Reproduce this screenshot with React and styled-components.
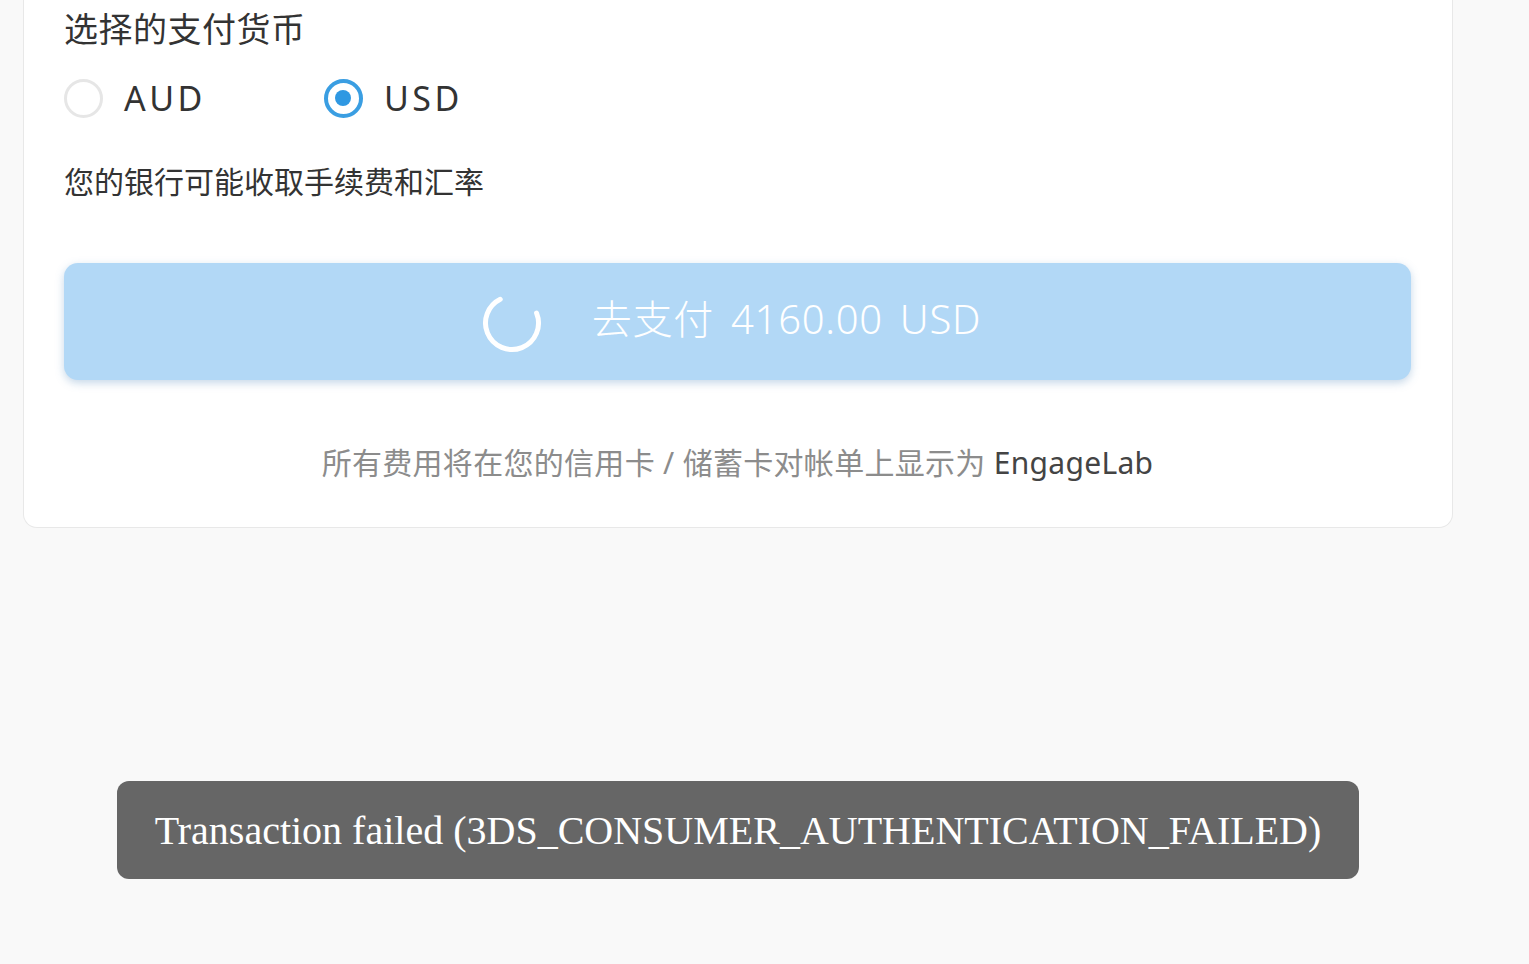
import styled, { createGlobalStyle } from "styled-components";

const GlobalStyle = createGlobalStyle`
  html, body {
    margin: 0;
    padding: 0;
    background: #f9f9f9;
  }
  body {
    font-family: "Noto Sans", "Noto Sans CJK SC", sans-serif;
    color: #333;
  }
`;

const Page = styled.div`
  padding: 0 76px 0 23px;
  min-height: 964px;
`;

const Card = styled.div`
  background: #fff;
  border: 1px solid #e8e8e8;
  border-top: 0;
  border-radius: 0 0 14px 14px;
  padding: 0 41px 34px 40px;
`;

const Title = styled.div`
  font-size: 34px;
  line-height: 58px;
  color: #333;
  letter-spacing: 0.5px;
`;

const RadioRow = styled.div`
  height: 80px;
  display: flex;
  align-items: center;
  gap: 118px;
`;

const RadioOption = styled.label`
  display: flex;
  align-items: center;
  gap: 21px;
  font-size: 34px;
  color: #333;
  letter-spacing: 3.5px;
`;

const RadioDot = styled.span`
  box-sizing: border-box;
  width: 39px;
  height: 39px;
  border-radius: 50%;
  border: ${(p) => (p.checked ? "4px solid #3a9ee2" : "3px solid #e6e6e6")};
  display: flex;
  align-items: center;
  justify-content: center;
  &::after {
    content: "";
    width: 16px;
    height: 16px;
    border-radius: 50%;
    background: #2f98e2;
    display: ${(p) => (p.checked ? "block" : "none")};
  }
`;

const Note = styled.div`
  font-size: 30px;
  line-height: 88px;
  color: #333;
`;

const PayButton = styled.button`
  margin-top: 37px;
  width: 100%;
  height: 117px;
  border: 0;
  border-radius: 14px;
  background: #b2d8f6;
  box-shadow: 0 3px 8px rgba(90, 140, 190, 0.35);
  display: flex;
  align-items: center;
  justify-content: center;
  gap: 50px;
  padding: 0 12px 0 0;
  color: #fff;
  font-family: "Noto Sans", "Noto Sans CJK SC", sans-serif;
  font-size: 40px;
  font-weight: 300;
  cursor: not-allowed;
`;

const ButtonLabel = styled.span`
  letter-spacing: 0.7px;
  word-spacing: 6px;
  padding-bottom: 9px;
`;

const Spinner = styled.svg`
  width: 60px;
  height: 60px;
  margin-top: 2px;
`;

const Footer = styled.div`
  margin-top: 53px;
  line-height: 60px;
  text-align: center;
  font-size: 30px;
  letter-spacing: 0.3px;
  color: #8c8c8c;
`;

const Brand = styled.span`
  color: #444;
`;

const ToastLayer = styled.div`
  position: fixed;
  top: 781px;
  left: 23px;
  width: 1430px;
  display: flex;
  justify-content: center;
  pointer-events: none;
`;

const Toast = styled.div`
  background: #666;
  color: #fff;
  border-radius: 12px;
  height: 98px;
  padding: 0 38px;
  display: flex;
  align-items: center;
  font-family: "Liberation Serif", "Times New Roman", serif;
  font-size: 40px;
  white-space: nowrap;
`;

const App = () => {
  return (
    <>
      <GlobalStyle />
      <Page>
        <Card>
          <Title>选择的支付货币</Title>
          <RadioRow>
            <RadioOption>
              <RadioDot />
              AUD
            </RadioOption>
            <RadioOption>
              <RadioDot checked />
              USD
            </RadioOption>
          </RadioRow>
          <Note>您的银行可能收取手续费和汇率</Note>
          <PayButton disabled>
            <Spinner viewBox="0 0 60 60">
              <circle
                cx="30"
                cy="30"
                r="26.5"
                fill="none"
                stroke="#fff"
                strokeWidth="5"
                strokeLinecap="round"
                strokeDasharray="122 167"
                transform="rotate(-22 30 30)"
              />
            </Spinner>
            <ButtonLabel>去支付 4160.00 USD</ButtonLabel>
          </PayButton>
          <Footer>
            所有费用将在您的信用卡 / 储蓄卡对帐单上显示为 <Brand>EngageLab</Brand>
          </Footer>
        </Card>
      </Page>
      <ToastLayer>
        <Toast>Transaction failed (3DS_CONSUMER_AUTHENTICATION_FAILED)</Toast>
      </ToastLayer>
    </>
  );
};

export default App;
